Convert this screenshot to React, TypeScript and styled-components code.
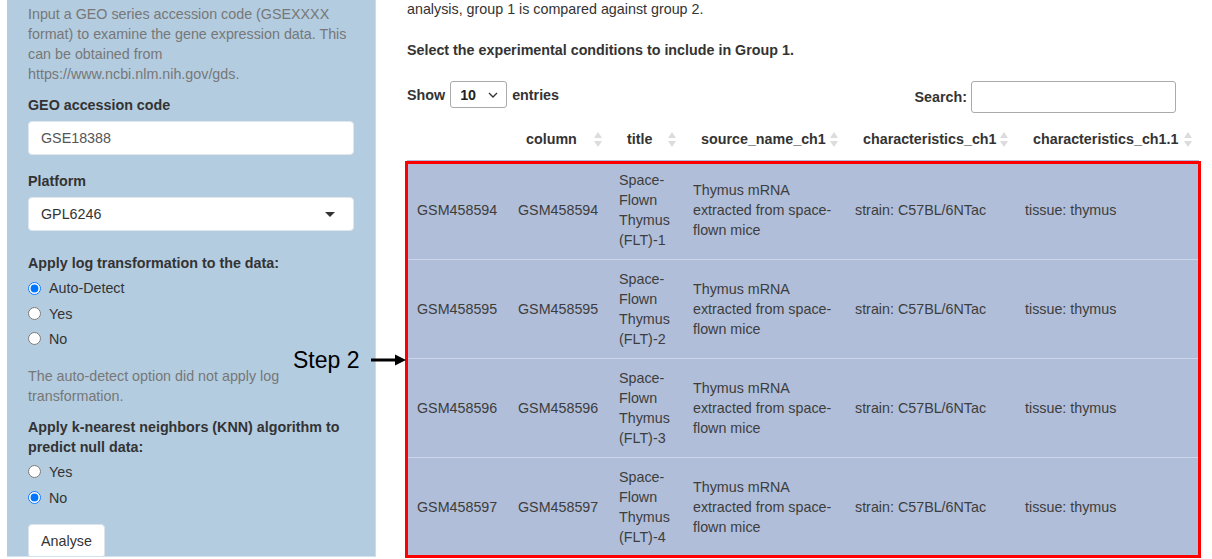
import React from "react";
import styled, { createGlobalStyle } from "styled-components";

const GlobalStyle = createGlobalStyle`
  html, body {
    margin: 0;
    padding: 0;
    background: #fff;
    overflow: hidden;
  }
  body {
    font-family: "Liberation Sans", Arial, sans-serif;
    font-size: 14.3px;
    line-height: 20px;
    color: #333;
  }
`;

type Row = { id: string; n: number };

const rows: Row[] = [
  { id: "GSM458594", n: 1 },
  { id: "GSM458595", n: 2 },
  { id: "GSM458596", n: 3 },
  { id: "GSM458597", n: 4 },
];

const Page = styled.div`
  position: relative;
  display: flex;
  width: 1212px;
  height: 559px;
`;

const Sidebar = styled.aside`
  box-sizing: border-box;
  margin-left: 7px;
  width: 369px;
  height: 557px;
  padding: 4px 21px 0 21px;
  background: #b3cce0;
  border-right: 1px solid #c9dcea;
  border-bottom: 1px solid #d4e2ee;
  overflow: hidden;
`;

const HelpText = styled.p<{ top?: number }>`
  margin: ${(p) => p.top ?? 0}px 0 0;
  color: #777;
  white-space: nowrap;
`;

const Label = styled.div<{ top?: number }>`
  margin-top: ${(p) => p.top ?? 0}px;
  font-weight: bold;
  color: #333;
  white-space: nowrap;
`;

const TextInput = styled.div`
  box-sizing: border-box;
  margin-top: 6px;
  height: 34px;
  padding: 0 12px;
  display: flex;
  align-items: center;
  background: #fff;
  border: 1px solid #dfe7ee;
  border-radius: 4px;
  color: #555;
`;

const SelectBox = styled(TextInput)`
  justify-content: space-between;
  color: #333;
  padding-right: 18px;
`;

const Caret = styled.span`
  width: 0;
  height: 0;
  border-left: 5px solid transparent;
  border-right: 5px solid transparent;
  border-top: 5px solid #333;
`;

const RadioRow = styled.label<{ top?: number }>`
  display: flex;
  align-items: center;
  height: 20px;
  margin-top: ${(p) => p.top ?? 5.5}px;
  color: #333;
  input {
    margin: 0 8px 0 0;
    width: 13px;
    height: 13px;
  }
`;

const Button = styled.div`
  box-sizing: border-box;
  margin-top: 16px;
  width: 77px;
  height: 34px;
  display: flex;
  align-items: center;
  justify-content: center;
  background: #fff;
  border: 1px solid #dde3ea;
  border-radius: 4px;
  color: #333;
`;

const Main = styled.main`
  margin-left: 31px;
  width: 794px;
  margin-top: -1px;
`;

const Para = styled.p<{ bold?: boolean; gap?: number }>`
  margin: 0 0 ${(p) => p.gap ?? 0}px;
  font-weight: ${(p) => (p.bold ? "bold" : "normal")};
  white-space: nowrap;
`;

const Toolbar = styled.div`
  width: 769px;
  display: flex;
  justify-content: space-between;
  align-items: flex-start;
  height: 32px;
`;

const Length = styled.div`
  display: flex;
  align-items: center;
  height: 27px;
  font-weight: bold;
  gap: 5px;
`;

const MiniSelect = styled.div`
  box-sizing: border-box;
  width: 57px;
  height: 27px;
  padding: 0 8px 0 9px;
  display: flex;
  align-items: center;
  justify-content: space-between;
  border: 1px solid #aaa;
  border-radius: 3px;
  font-weight: bold;
  color: #222;
`;

const Filter = styled.div`
  display: flex;
  align-items: center;
  gap: 4px;
  font-weight: bold;
`;

const SearchInput = styled.div`
  box-sizing: border-box;
  width: 205px;
  height: 32px;
  border: 1px solid #aaa;
  border-radius: 3px;
`;

const Table = styled.table`
  border-collapse: collapse;
  table-layout: fixed;
  width: 792px;
`;

const HeadTable = styled(Table)`
  margin-top: 6px;
`;

const Th = styled.th`
  height: 40px;
  padding: 0 7px 0 18px;
  text-align: left;
  font-weight: bold;
  white-space: nowrap;
`;

const ThInner = styled.div`
  display: flex;
  align-items: center;
  justify-content: space-between;
`;

const BodyWrap = styled.div`
  position: relative;
  margin-top: 1px;
  width: 792px;
`;

const Highlight = styled.div`
  position: absolute;
  left: -2px;
  top: 1px;
  right: -2px;
  bottom: -1px;
  border: 3px solid #fe0000;
  pointer-events: none;
`;

const Tr = styled.tr<{ first?: boolean }>`
  height: 99px;
  background: #b0bed9;
  border-top: 1px solid ${(p) => (p.first ? "#b0bed9" : "#cdd6e8")};
`;

const Td = styled.td`
  padding: 0 10px;
  vertical-align: middle;
  color: #3d3d3d;
  white-space: nowrap;
`;

const StepLabel = styled.div`
  position: absolute;
  left: 293px;
  top: 345px;
  font-size: 23px;
  line-height: 30px;
  color: #000;
`;

const ArrowSvg = styled.svg`
  position: absolute;
  left: 371px;
  top: 353px;
`;

const SortIcon = () => (
  <svg width="8" height="15" viewBox="0 0 8 15">
    <path d="M4 0 L8 6 L0 6 Z" fill="#dcdcdc" />
    <path d="M0 9 L8 9 L4 15 Z" fill="#dcdcdc" />
  </svg>
);

const Chevron = () => (
  <svg width="10" height="6" viewBox="0 0 10 6">
    <path d="M1 1 L5 5 L9 1" fill="none" stroke="#333" strokeWidth="1.3" />
  </svg>
);

const headers = [
  "column",
  "title",
  "source_name_ch1",
  "characteristics_ch1",
  "characteristics_ch1.1",
];

const widths = [101, 101, 74, 162, 170, 184];

const Cols = () => (
  <colgroup>
    {widths.map((w, i) => (
      <col key={i} style={{ width: w }} />
    ))}
  </colgroup>
);

export default function App() {
  return (
    <>
      <GlobalStyle />
      <Page>
        <Sidebar>
          <HelpText>
            Input a GEO series accession code (GSEXXXX
            <br />
            format) to examine the gene expression data. This
            <br />
            can be obtained from
            <br />
            https://www.ncbi.nlm.nih.gov/gds.
          </HelpText>
          <Label top={11}>GEO accession code</Label>
          <TextInput>GSE18388</TextInput>
          <Label top={16}>Platform</Label>
          <SelectBox>
            GPL6246
            <Caret />
          </SelectBox>
          <Label top={22}>Apply log transformation to the data:</Label>
          <RadioRow top={5}>
            <input type="radio" name="log" defaultChecked />
            Auto-Detect
          </RadioRow>
          <RadioRow>
            <input type="radio" name="log" />
            Yes
          </RadioRow>
          <RadioRow top={5}>
            <input type="radio" name="log" />
            No
          </RadioRow>
          <HelpText top={17}>
            The auto-detect option did not apply log
            <br />
            transformation.
          </HelpText>
          <Label top={11}>
            Apply k-nearest neighbors (KNN) algorithm to
            <br />
            predict null data:
          </Label>
          <RadioRow top={5}>
            <input type="radio" name="knn" />
            Yes
          </RadioRow>
          <RadioRow top={6}>
            <input type="radio" name="knn" defaultChecked />
            No
          </RadioRow>
          <Button>Analyse</Button>
        </Sidebar>

        <Main>
          <Para gap={21}>analysis, group 1 is compared against group 2.</Para>
          <Para bold gap={21}>
            Select the experimental conditions to include in Group 1.
          </Para>
          <Toolbar>
            <Length>
              Show
              <MiniSelect>
                10
                <Chevron />
              </MiniSelect>
              entries
            </Length>
            <Filter>
              Search:
              <SearchInput />
            </Filter>
          </Toolbar>

          <HeadTable>
            <Cols />
            <thead>
              <tr>
                <Th />
                {headers.map((h) => (
                  <Th key={h}>
                    <ThInner>
                      {h}
                      <SortIcon />
                    </ThInner>
                  </Th>
                ))}
              </tr>
            </thead>
          </HeadTable>

          <BodyWrap>
            <Table>
              <Cols />
              <tbody>
                {rows.map((r, i) => (
                  <Tr key={r.id} first={i === 0}>
                    <Td>{r.id}</Td>
                    <Td>{r.id}</Td>
                    <Td>
                      Space-
                      <br />
                      Flown
                      <br />
                      Thymus
                      <br />
                      (FLT)-{r.n}
                    </Td>
                    <Td>
                      Thymus mRNA
                      <br />
                      extracted from space-
                      <br />
                      flown mice
                    </Td>
                    <Td>strain: C57BL/6NTac</Td>
                    <Td>tissue: thymus</Td>
                  </Tr>
                ))}
              </tbody>
            </Table>
            <Highlight />
          </BodyWrap>
        </Main>

        <StepLabel>Step 2</StepLabel>
        <ArrowSvg width="36" height="14" viewBox="0 0 36 14">
          <path d="M0 7 H26" stroke="#000" strokeWidth="3" />
          <path d="M24 1.5 L35 7 L24 12.5 Z" fill="#000" />
        </ArrowSvg>
      </Page>
    </>
  );
}
